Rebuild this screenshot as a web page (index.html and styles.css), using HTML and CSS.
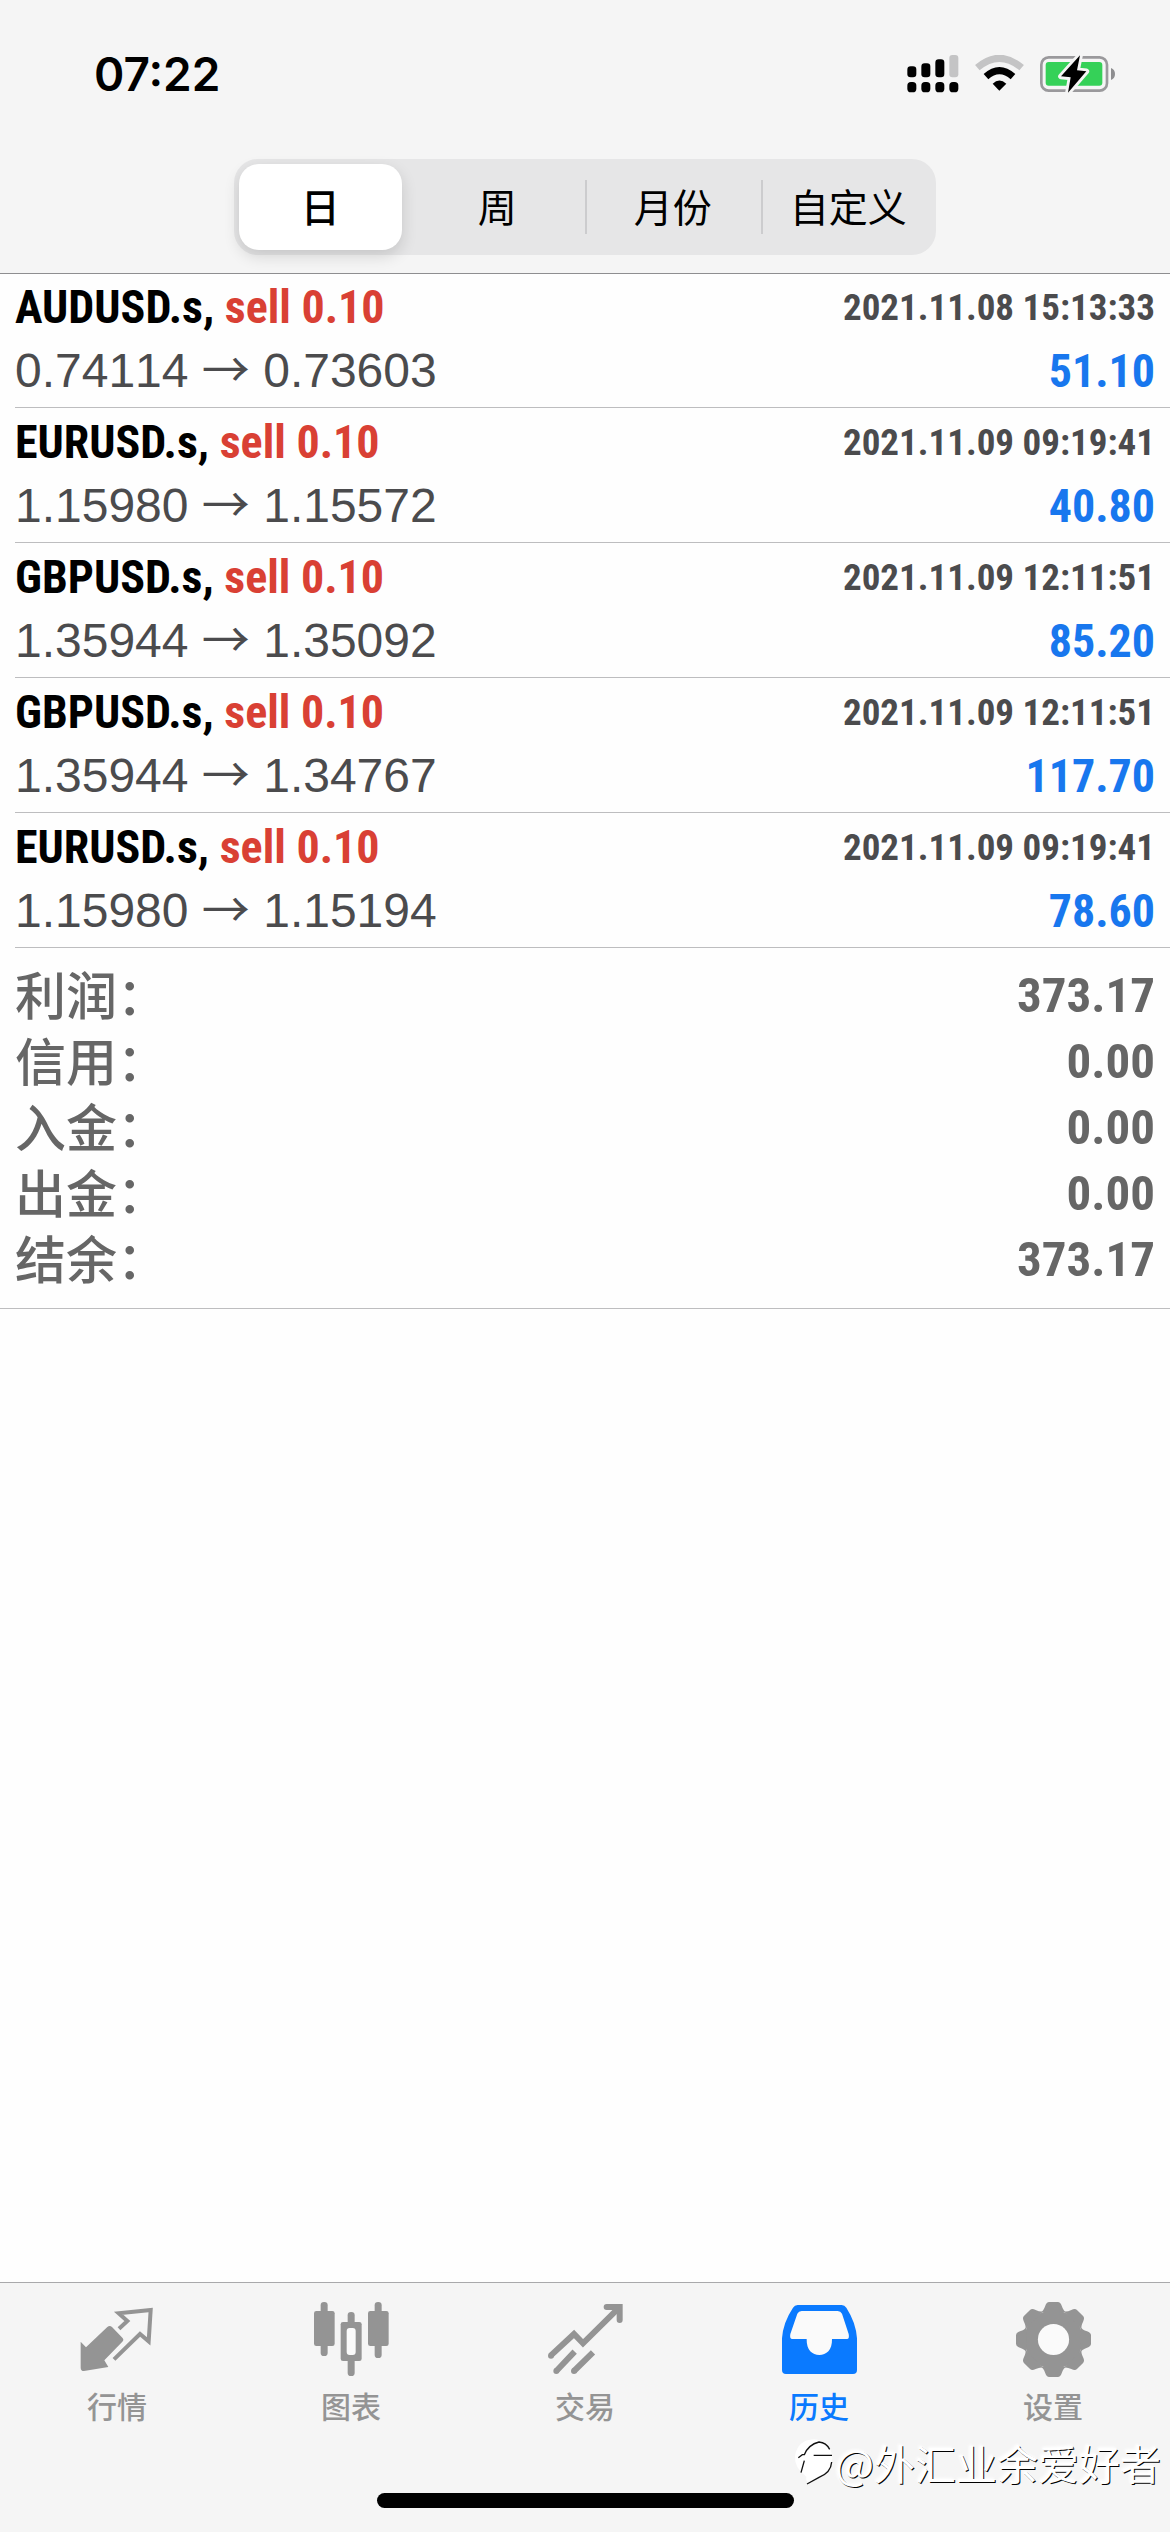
FILE: index.html
```html
<!DOCTYPE html>
<html lang="zh-CN">
<head>
<meta charset="utf-8">
<meta name="viewport" content="width=device-width, initial-scale=1">
<title>历史</title>
<link rel="stylesheet" href="styles.css">
</head>
<body>
<header class="top">
  <div class="status">
    <time class="clock">07:22</time>
    <div class="status-icons">
      <svg width="52" height="38" viewBox="80 77 156 114" aria-hidden="true">
        <g fill="#000">
          <rect x="81" y="111" width="27" height="33" rx="10"/>
          <rect x="123" y="102" width="27" height="42" rx="10"/>
          <rect x="165" y="90" width="27" height="54" rx="10"/>
          <rect x="81" y="158" width="27" height="31" rx="11"/>
          <rect x="123" y="158" width="27" height="31" rx="11"/>
          <rect x="165" y="158" width="27" height="31" rx="11"/>
          <rect x="207" y="158" width="27" height="31" rx="11"/>
        </g>
        <rect x="207" y="77" width="27" height="67" rx="9" fill="#c4c4c5"/>
      </svg>
      <svg width="49" height="38" viewBox="284 77 147 114" aria-hidden="true">
        <path d="M291 115Q357 59 424 115" fill="none" stroke="#c4c4c5" stroke-width="21"/>
        <path d="M317 142Q357 106 398 142" fill="none" stroke="#000" stroke-width="21"/>
        <path d="M337 163Q357 144 378 163L357 184Z" fill="#000"/>
      </svg>
      <svg width="76" height="38" viewBox="480 75 228 114" aria-hidden="true">
        <rect x="484" y="82" width="197" height="100" rx="22" fill="none" stroke="#9a999c" stroke-width="8"/>
        <rect x="497" y="96" width="170" height="71" rx="9" fill="#35d158"/>
        <path d="M693 114Q705 119 705 132Q705 145 693 150Z" fill="#8e8e90"/>
        <path d="M600 76L543 139L572 142L564 188L619 124L591 121Z" fill="#000" stroke="#f5f5f5" stroke-width="17" stroke-linejoin="round" paint-order="stroke"/>
      </svg>
    </div>
  </div>
  <div class="segments" role="group" aria-label="时间范围">
    <button class="segment segment-on" type="button" aria-pressed="true">日</button>
    <button class="segment" type="button" aria-pressed="false">周</button>
    <button class="segment segment-split" type="button" aria-pressed="false">月份</button>
    <button class="segment segment-split" type="button" aria-pressed="false">自定义</button>
  </div>
</header>

<main class="content">
  <ul class="deals">
    <li class="deal">
      <div class="line"><span class="symbol">AUDUSD.s, <span class="side">sell 0.10</span></span><time class="date">2021.11.08 15:13:33</time></div>
      <div class="line"><span class="prices">0.74114 <span class="arrow">→</span> 0.73603</span><span class="profit">51.10</span></div>
    </li>
    <li class="deal">
      <div class="line"><span class="symbol">EURUSD.s, <span class="side">sell 0.10</span></span><time class="date">2021.11.09 09:19:41</time></div>
      <div class="line"><span class="prices">1.15980 <span class="arrow">→</span> 1.15572</span><span class="profit">40.80</span></div>
    </li>
    <li class="deal">
      <div class="line"><span class="symbol">GBPUSD.s, <span class="side">sell 0.10</span></span><time class="date">2021.11.09 12:11:51</time></div>
      <div class="line"><span class="prices">1.35944 <span class="arrow">→</span> 1.35092</span><span class="profit">85.20</span></div>
    </li>
    <li class="deal">
      <div class="line"><span class="symbol">GBPUSD.s, <span class="side">sell 0.10</span></span><time class="date">2021.11.09 12:11:51</time></div>
      <div class="line"><span class="prices">1.35944 <span class="arrow">→</span> 1.34767</span><span class="profit">117.70</span></div>
    </li>
    <li class="deal">
      <div class="line"><span class="symbol">EURUSD.s, <span class="side">sell 0.10</span></span><time class="date">2021.11.09 09:19:41</time></div>
      <div class="line"><span class="prices">1.15980 <span class="arrow">→</span> 1.15194</span><span class="profit">78.60</span></div>
    </li>
  </ul>
  <dl class="summary">
    <div class="total"><dt>利润：</dt><dd>373.17</dd></div>
    <div class="total"><dt>信用：</dt><dd>0.00</dd></div>
    <div class="total"><dt>入金：</dt><dd>0.00</dd></div>
    <div class="total"><dt>出金：</dt><dd>0.00</dd></div>
    <div class="total"><dt>结余：</dt><dd>373.17</dd></div>
  </dl>
</main>

<footer class="bottom">
  <nav class="tabs">
    <a class="tab" href="#quotes">
      <svg class="tab-icon" viewBox="28 36 225 225" aria-hidden="true">
        <path d="M30 155L46 172L110 111Q117 105 124 111L155 143Q161 149 155 155L101 211L113 231L40 243Q30 243 30 233Z" fill="currentColor"/>
        <path d="M145 116L170 93L144 70L240 60L234 154L208 132L130 208" fill="none" stroke="currentColor" stroke-width="12"/>
      </svg>
      行情
    </a>
    <a class="tab" href="#chart">
      <svg class="tab-icon" viewBox="730 36 225 225" aria-hidden="true">
        <g fill="currentColor">
          <rect x="750" y="36" width="21" height="162" rx="10"/>
          <rect x="730" y="63" width="62" height="105" rx="7"/>
          <rect x="912" y="36" width="21" height="168" rx="10"/>
          <rect x="892" y="63" width="62" height="105" rx="7"/>
          <rect x="831" y="66" width="21" height="192" rx="10"/>
          <rect x="810" y="96" width="63" height="117" rx="7"/>
        </g>
        <rect x="828" y="114" width="27" height="81" rx="9" fill="#fafafa"/>
      </svg>
      图表
    </a>
    <a class="tab" href="#trade">
      <svg class="tab-icon" viewBox="52 36 225 225" aria-hidden="true">
        <g fill="none" stroke="currentColor" stroke-width="18">
          <path d="M60 197L130 132L157 160L266 52M132 185L77 243M187 187L130 243"/>
          <path d="M228 51H267V90" stroke-linecap="round"/>
        </g>
        <g fill="currentColor"><circle cx="61" cy="197" r="9"/><circle cx="77" cy="243" r="9"/><circle cx="130" cy="243" r="9"/></g>
      </svg>
      交易
    </a>
    <a class="tab tab-on" href="#history" aria-current="page">
      <svg class="tab-icon" viewBox="753 36 225 225" aria-hidden="true">
        <path d="M800 45H932Q941 45 946 53Q975 98 978 145V240Q978 252 966 252H765Q753 252 753 240V145Q756 98 786 53Q791 45 800 45Z" fill="currentColor"/>
        <path d="M812 63H920Q929 63 933 71L953 132Q956 147 948 147H903C904 180 886 195 865 195C844 195 826 180 827 147H784Q775 147 778 132L799 71Q803 63 812 63Z" fill="#fafafa"/>
      </svg>
      历史
    </a>
    <a class="tab" href="#settings">
      <svg class="tab-icon" viewBox="-113 -113 226 226" aria-hidden="true">
        <g fill="currentColor">
          <circle r="88"/>
          <g id="teeth">
            <path id="tooth" d="M-38 -82Q-30 -86 -25 -101Q-21 -113 -13 -113H13Q21 -113 25 -101Q30 -86 38 -82Z"/>
            <use href="#tooth" transform="rotate(45)"/>
            <use href="#tooth" transform="rotate(90)"/>
            <use href="#tooth" transform="rotate(135)"/>
          </g>
          <use href="#teeth" transform="rotate(180)"/>
        </g>
        <circle r="47" fill="#fafafa"/>
      </svg>
      设置
    </a>
  </nav>
  <div class="home-indicator"></div>
  <div class="watermark">
    <svg width="42" height="50" viewBox="28 465 126 150" aria-hidden="true">
      <path d="M90 472A58 56 0 0 1 146 528Q142 566 108 584L74 605Q66 596 68 584Q32 560 34 522Q42 474 90 472Z" fill="#fff"/>
      <path d="M44 527L56 518H62Q74 488 106 480Q128 482 138 502M90 520H145M62 536L52 572M144 540Q142 572 106 586L70 606" fill="none" stroke="#111" stroke-width="4"/>
    </svg>
    <span>@外汇业余爱好者</span>
  </div>
</footer>
</body>
</html>
```
FILE: styles.css
```css
* {
  box-sizing: border-box;
}

body {
  margin: 0;
  min-height: 100vh;
  display: flex;
  flex-direction: column;
  background: #fefefe;
  color: #000;
  font-family: "Liberation Sans", "Noto Sans CJK SC", sans-serif;
  font-kerning: none;
}

.top {
  display: flex;
  flex-direction: column;
  align-items: center;
  padding-bottom: 18px;
  background: #f5f5f5;
  border-bottom: 1px solid #8e8e90;
}

.status {
  align-self: stretch;
  display: flex;
  align-items: center;
  justify-content: space-between;
  height: 148px;
  padding: 0 54px 0 94px;
}

.clock {
  font: 600 46px/56px Inter, sans-serif;
}

.status-icons {
  display: flex;
  gap: 16px;
}

/* Range switch */
.segments {
  display: grid;
  grid-template-columns: repeat(4, 1fr);
  width: 60%;
  height: 96px;
  margin-top: 11px;
  padding: 5px 0;
  border-radius: 24px;
  background: #e6e6e7;
}

.segment {
  position: relative;
  padding: 0 0 4px;
  border: 0;
  border-radius: 20px;
  background: none;
  color: #000;
  font: 400 39px/48px "Noto Sans CJK SC", sans-serif;
}

.segment-on {
  margin: 0 8px 0 5px;
  background: #fff;
  font-weight: 500;
  box-shadow: 0 6px 16px rgba(0, 0, 0, 0.14);
}

.segment-split::before {
  content: "";
  position: absolute;
  left: 0;
  top: 16px;
  bottom: 16px;
  width: 2px;
  background: #ccccce;
}

.content {
  flex: 1;
}

/* Closed deals */
.deals {
  margin: 0;
  padding: 0 0 0 15px;
  list-style: none;
}

.deal {
  height: 135px;
  padding: 2px 15px 0 0;
  border-bottom: 1px solid #bdbdbf;
}

.deal:first-child {
  height: 134px;
  padding-top: 1px;
}

.line {
  display: flex;
  align-items: center;
  justify-content: space-between;
  height: 64px;
  white-space: nowrap;
}

.symbol,
.date,
.profit,
.total dd {
  font-family: "Roboto Condensed", "Liberation Sans Narrow", sans-serif;
  font-weight: 700;
}

.symbol {
  font-size: 46px;
  font-kerning: normal;
}

.side {
  color: #d94034;
}

.date {
  color: #4b4b4d;
  font-size: 37px;
}

.prices {
  color: #4b4b4d;
  font-size: 48px;
  line-height: 64px;
}

.arrow {
  font-family: "Noto Sans CJK SC", sans-serif;
  line-height: 48px;
}

.profit {
  color: #1877ee;
  font-size: 46px;
}

/* Totals */
.summary {
  margin: 0;
  padding: 15px;
  border-bottom: 1px solid #bdbdbf;
  color: #666;
}

.total {
  display: flex;
  align-items: center;
  justify-content: space-between;
  height: 66px;
}

.total dt {
  padding-bottom: 6px;
  font: 500 51px/60px "Noto Sans CJK SC", sans-serif;
}

.total dd {
  margin: 0;
  font-size: 49px;
  line-height: 66px;
}

/* Tab bar */
.bottom {
  position: relative;
  padding: 19px 0 24px;
  background: #f5f5f5;
  border-top: 1px solid #a9a9ab;
}

.tabs {
  display: grid;
  grid-template-columns: repeat(5, 1fr);
}

.tab {
  display: flex;
  flex-direction: column;
  align-items: center;
  gap: 10px;
  color: #949494;
  font: 500 30px/36px "Noto Sans CJK SC", sans-serif;
  text-decoration: none;
}

.tab-on {
  color: #0a7aff;
}

.tab-icon {
  width: 75px;
  height: 75px;
}

.home-indicator {
  width: 417px;
  height: 15px;
  margin: 70px auto 0;
  border-radius: 8px;
  background: #000;
}

.watermark {
  position: absolute;
  right: 9px;
  bottom: 42px;
  display: flex;
  align-items: center;
  color: #fff;
  font: 400 41px/56px "Noto Sans CJK SC", sans-serif;
  text-shadow: 1px 1px 0 #000, -1px -1px 3px #fff;
}
```
